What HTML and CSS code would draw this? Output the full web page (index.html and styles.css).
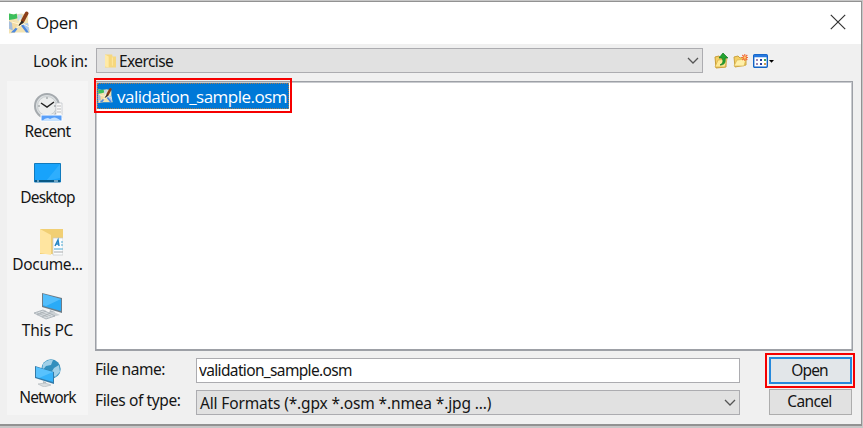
FILE: index.html
```html
<!DOCTYPE html>
<html lang="en">
<head>
<meta charset="utf-8">
<title>Open</title>
<link rel="stylesheet" href="styles.css">
</head>
<body>
<svg class="defs" width="0" height="0" aria-hidden="true">
  <symbol id="map-logo" viewBox="0 0 22 23">
    <path d="M0 2l6 1 7-1 7 2 0 8 2 10-8 0-6 0-8 1 0-10z" fill="#f3e3b2"/>
    <path d="M0 2l5 1 3-1 1 5-4 1-5 1z" fill="#3cbf5c"/>
    <path d="M9 3l5 0-1 6-4 1z" fill="#c9dbe8"/>
    <path d="M1 12l4-2 4 3-3 5-5 1z" fill="#f3dba4"/>
    <path d="M0 10l3 2 1 8-4-2z" fill="#a5bddb"/>
    <path d="M15 13l5-1 1 8-4 0-3-5z" fill="#a8c9f2"/>
    <path d="M2 22l5-5 2 1-3 4zM12 14l3 0 6 8-3 0z" fill="#4d88e0"/>
    <path d="M3 11l7 2 2-6M8 17l7-4 6 3" stroke="#fff7da" stroke-width="1" fill="none"/>
    <path d="M18.5 2L14.5 9.5" stroke="#8b3e19" stroke-width="3.8" stroke-linecap="round"/>
    <path d="M13.5 10l-3 4.5 4.5-3z" fill="#292827" stroke="#292827"/>
  </symbol>
</svg>
<div class="window">
  <header class="titlebar">
    <svg class="app-icon"><use href="#map-logo"/></svg>
    <h1>Open</h1>
    <svg class="close" viewBox="0 0 16 16"><path d="M.8.8l14.4 14.4M15.2.8L.8 15.2"/></svg>
  </header>
  <div class="lookup">
    <span class="look-label">Look in:</span>
    <div class="combo look-combo">
      <svg class="folder" viewBox="0 0 12 14"><path d="M0 0h8v2h4v12H0z" fill="#f6d77e"/><path d="M0 0l4 2v12l-4-1z" fill="#ffeaa7"/><path d="M8 3v9" stroke="#ffe9a4"/></svg>
      <span class="t-exercise">Exercise</span>
      <svg class="chevron" viewBox="0 0 12 7"><path d="M1 1l5 5 5-5"/></svg>
    </div>
    <div class="tools">
      <svg width="14" height="17" viewBox="0 0 14 17"><path d="M1 5l4-1 2 2h5v9l-10 1z" fill="#f4cf64" stroke="#c89d36"/><path d="M1 15l3-7 9-1-2 8z" fill="#ffe994" stroke="#d4aa40" stroke-width=".7"/><path d="M6 13c4-2 3-5 2-7H5l4-5 5 5h-3c1 5-1 7-5 7z" fill="#24a331" stroke="#117b20" stroke-width=".7"/></svg>
      <svg width="15" height="14" viewBox="0 0 15 14"><path d="M1 3l4-1 2 2 6-1v8L2 13z" fill="#f4cf64" stroke="#cba33f"/><path d="M1 12l3-6 9-1-2 7z" fill="#fff0a9" stroke="#d9b34d" stroke-width=".7"/><path d="M11.8 0v7M8.3 3.5h7M9.3 1l5 5M14.3 1l-5 5" stroke="#f26a35" stroke-width="1.1"/><circle cx="11.8" cy="3.5" r="1.2" fill="#ffcc70"/></svg>
      <svg width="22" height="14" viewBox="0 0 22 14"><rect x=".7" y=".7" width="13.6" height="12.6" rx="1" fill="#fff" stroke="#1263c6" stroke-width="1.4"/><path d="M1 2h13" stroke="#2879df" stroke-width="2.5"/><path d="M3 6h2M3 10h2" stroke="#9b86b5" stroke-width="2"/><path d="M7 6h2M7 10h2" stroke="#2541a0" stroke-width="2"/><path d="M11 6h2" stroke="#35a357" stroke-width="2"/><path d="M11 10h2" stroke="#d29a4e" stroke-width="2"/><path d="M16 6h5L18.5 8.8z" fill="#000"/></svg>
    </div>
  </div>
  <div class="content">
    <nav class="places">
      <div class="place"><svg width="29" height="29" viewBox="0 0 29 29"><circle cx="13" cy="13" r="12" fill="#dce0e2" stroke="#a5aaae" stroke-width="2"/><circle cx="13" cy="13" r="9.5" fill="#eceeee" stroke="#c9ced0"/><path d="M13 4v2M4 13h2M20 13h2" stroke="#858b8e"/><path d="M7 10l6 4 7-5" fill="none" stroke="#222" stroke-width="1.5"/><path d="M22 10h6v15h-6z" fill="#fafafa" stroke="#bbc0c6" stroke-width=".7"/><path d="M23 13h4M23 16h4M23 19h4" stroke="#bbb"/><path d="M7 22h21v6H7z" fill="#579ef8" stroke="#fff"/><path d="M8 28q5-5 8-2 5-4 11 2z" fill="#c4e1ff"/></svg><span class="t-recent">Recent</span></div>
      <div class="place"><svg width="27" height="20" viewBox="0 0 27 20"><path d="M.5.5h26v18.5H.5z" fill="#18a3fb" stroke="#107abd"/><path d="M26 1v14L12 18z" fill="#3eb6ff" opacity=".6"/><path d="M1 18h25" stroke="#085885" stroke-width="2"/><path d="M3 18h2M20 18h4" stroke="#d4efff"/></svg><span class="t-desktop">Desktop</span></div>
      <div class="place documents"><svg width="23" height="27" viewBox="0 0 23 27"><path d="M0 0h23v25H0z" fill="#f1cf74"/><path d="M0 0l11 6v20L0 24z" fill="#ffe5a0"/><path d="M13 9h10v17H13z" fill="#fbfdff" stroke="#c6c8ca" stroke-width=".7"/><path d="M15 17l3-6 1 6M16 15h3" stroke="#2786c5" stroke-width="1.5" fill="none"/><path d="M21 13h2M21 16h2M14 20h9" stroke="#4aa8d3"/><path d="M14 23h9" stroke="#aaa"/></svg><span class="t-docs">Docume...</span></div>
      <div class="place"><svg width="30" height="27" viewBox="0 0 30 27"><path d="M9 0l20 5v15L9 14z" fill="#6d7c87"/><path d="M10 1l18 5v12L10 13z" fill="#2aabf7"/><path d="M10 1l18 5-15 7-3-1z" fill="#68c8ff" opacity=".65"/><path d="M17 17l5 2v3l-6-1z" fill="#b1bac0"/><path d="M12 20l9-1 6 3-8 2z" fill="#ccd1d4"/><path d="M1 20l9-3 12 6-9 3z" fill="#d7dcdf" stroke="#9ba4aa" stroke-width=".7"/><path d="M4 20l11 4M7 19l11 4M4 22l9-4M9 24l8-4" stroke="#9da5aa" stroke-width=".6"/></svg><span class="t-pc">This PC</span></div>
      <div class="place network"><svg width="28" height="28" viewBox="0 0 28 28"><circle cx="17" cy="10" r="9.7" fill="#328fbd"/><path d="M9 5q5-5 10-4l-2 5-5 1-4 5zM20 9l5-3 1 7-5 5-4-4z" fill="#a0d0e8"/><path d="M1 7l19 6v12L1 19z" fill="#327aa8"/><path d="M2 8l17 5v10L2 18z" fill="#35b2fa"/><path d="M2 8l17 5-14 6-3-1z" fill="#70cdff" opacity=".6"/><path d="M9 22l3 1v3H9z" fill="#b3bdc2"/><path d="M4 25l7-1 6 2-7 2z" fill="#d9dddf" stroke="#aeb5ba" stroke-width=".6"/></svg><span class="t-network">Network</span></div>
    </nav>
    <main>
      <div class="files"><div class="selected-file"><svg class="file-icon"><use href="#map-logo"/></svg><span>validation_sample.osm</span></div><div class="file-highlight"></div></div>
      <div class="bottom">
        <div class="form-row"><label class="t-name" for="filename">File name:</label><input id="filename" value="validation_sample.osm"></div>
        <div class="form-row type-row"><span class="t-type">Files of type:</span><div class="combo type-combo"><span class="t-formats">All Formats (*.gpx *.osm *.nmea *.jpg ...)</span><svg class="chevron" viewBox="0 0 12 7"><path d="M1 1l5 5 5-5"/></svg></div></div>
        <div class="buttons"><div class="open-wrap"><button class="open">Open</button></div><button class="cancel">Cancel</button></div>
      </div>
    </main>
  </div>
</div>
</body>
</html>
```
FILE: styles.css
```css
* { box-sizing: border-box; }
body { margin: 0; width: 863px; height: 428px; overflow: hidden; background: #c7c7c7; font: 15.5px/20px "Noto Sans", sans-serif; color: #151515; letter-spacing: -.65px; }
svg { display: block; flex: none; }
span, label { white-space: nowrap; }
.defs { position: absolute; }
.window { width: 862px; height: 425px; margin-top: 1px; background: #f0f0f0; border: solid #929292; border-width: 1px 1px 2px 0; }
.titlebar { height: 42px; display: flex; align-items: center; background: #fff; padding: 0 15px 0 9px; }
.app-icon { width: 21px; height: 23px; margin-top: -2px; }
h1 { margin: 0 auto 0 6px; font: 17px/24px "Open Sans", sans-serif; letter-spacing: -.45px; }
.close { width: 16px; height: 16px; fill: none; stroke: #333; stroke-width: 1.2; margin-top: -2px; }
.lookup { height: 37px; display: flex; align-items: flex-start; padding: 4px 0 0 33px; }
.look-label { width: 63px; margin-top: 3px; letter-spacing: -.3px; }
.combo { border: 1px solid #acacb0; background: #e1e1e1; display: flex; align-items: center; }
.look-combo { width: 607px; height: 25px; padding: 0 3px 0 8px; }
.folder { width: 11px; height: 14px; margin-right: 3px; }
.t-exercise { margin-top: 1px; letter-spacing: -.6px; }
.chevron { width: 12px; height: 7px; margin-left: auto; fill: none; stroke: #555; stroke-width: 1.3; }
.tools { margin: 4px 0 0 11px; display: flex; align-items: center; gap: 5px; }
.content { display: flex; gap: 7px; padding-left: 7px; }
.places { width: 81px; height: 334px; background: #f5f5f5; display: grid; grid-template-rows: repeat(5, 66.5px); }
.place { display: flex; flex-direction: column; align-items: center; justify-content: flex-end; padding-bottom: 8px; }
.place span { height: 19px; }
.place:nth-child(1) svg { margin: 0 0 -1px 2px; }
.place:nth-child(2) svg { margin-bottom: 4px; }
.documents svg { margin: 0 0 -2px 7px; }
.t-docs { letter-spacing: -.35px; }
.t-pc { letter-spacing: -.2px; }
.t-network, .t-desktop { letter-spacing: -.85px; }
main { width: 758px; }
.files { height: 270px; border: 1.5px solid #9da0a6; border-bottom-width: 2px; background: #fff; position: relative; padding: 1px; box-shadow: inset 1px 1px #c9cbcf, inset -1px 0 #c9cbcf; }
.selected-file { width: 192px; height: 26px; background: #0078d7; color: #fff; border: 1px dotted #a97a4c; display: flex; align-items: center; }
.file-icon { width: 15px; height: 15px; margin: 0 4px 2px 0; }
.selected-file span { font: 17px/24px "Open Sans", sans-serif; letter-spacing: -.52px; margin-top: 2px; }
.file-highlight { position: absolute; left: -2px; top: -4px; width: 198px; height: 35px; border: 2px solid #f60000; }
.bottom { position: relative; padding-top: 7px; }
.form-row { display: flex; width: 645px; }
.form-row > :first-child { width: 101px; flex: none; }
.t-name, .t-type { letter-spacing: -.45px; margin-top: 1px; }
.t-type { letter-spacing: -.38px; margin-top: 0; }
.form-row input { width: 544px; height: 25px; border: 1px solid #acacb0; background: #fff; padding: 0 2px 1px; font: inherit; letter-spacing: inherit; color: inherit; outline: 0; }
.type-row { margin-top: 7px; }
.type-combo { width: 544px; height: 25px; padding: 0 3px; }
.t-formats { letter-spacing: -.15px; }
.buttons { position: absolute; top: 2px; right: -2px; width: 90px; }
.open-wrap { border: 2px solid #f60000; height: 35px; padding: 2px; }
button { display: block; padding: 0 2px 2px 0; font: inherit; letter-spacing: inherit; color: inherit; text-align: center; background: #e1e1e1; border: 1px solid #adadad; }
.open { width: 83px; height: 27px; border: 2px solid #2589dc; background: #e2e6e9; letter-spacing: -.9px; }
.cancel { width: 83px; height: 26px; margin: 1px 0 0 4px; }
```
